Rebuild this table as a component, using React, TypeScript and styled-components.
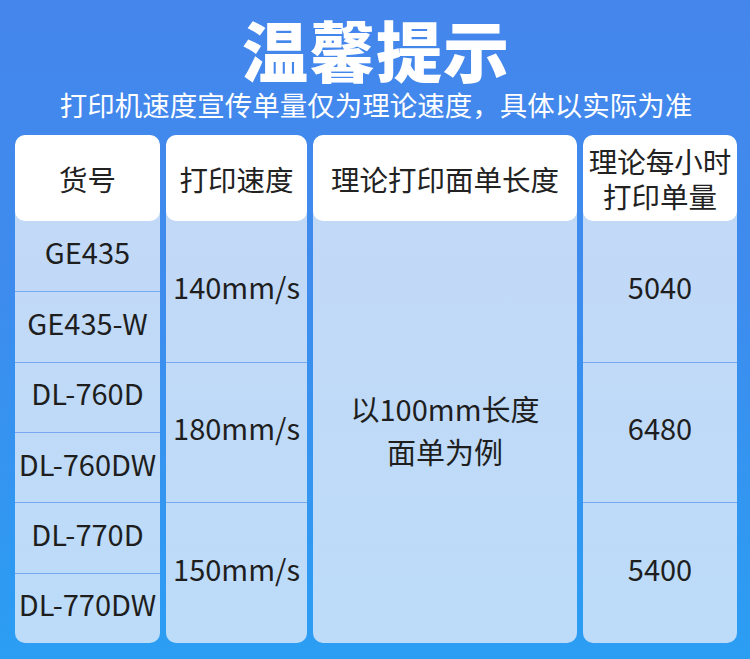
import * as React from 'react';
import styled, { createGlobalStyle } from 'styled-components';

const GlobalStyle = createGlobalStyle`
  html, body {
    margin: 0;
    padding: 0;
  }
  body {
    font-family: 'Noto Sans CJK SC', 'Noto Sans', sans-serif;
  }
`;

const Page = styled.main`
  width: 750px;
  height: 659px;
  box-sizing: border-box;
  padding: 0 13px 16px 15px;
  display: flex;
  flex-direction: column;
  background: linear-gradient(180deg, #4586ec 0%, #3d8cee 45%, #2b9ef3 100%);
  overflow: hidden;
`;

const Banner = styled.header`
  display: flex;
  flex-direction: column;
  align-items: center;
  height: 135px;
  color: #fff;
`;

const Title = styled.h1`
  margin: 12px 0 0;
  font-size: 66px;
  line-height: 72px;
  font-weight: 900;
  letter-spacing: 1px;
`;

const Subtitle = styled.p`
  margin: 2px 0 0;
  font-size: 27.5px;
  line-height: 36px;
  font-weight: 400;
`;

const Table = styled.section`
  flex: 1;
  display: grid;
  grid-template-columns: 145px 141px 264px 154px;
  column-gap: 6px;
`;

const Column = styled.div`
  display: flex;
  flex-direction: column;
  border-radius: 10px;
  overflow: hidden;
  background: linear-gradient(180deg, #c3d8f6 0%, #bcdcf9 100%);
`;

const HeadCell = styled.div`
  height: 86px;
  flex: none;
  display: flex;
  align-items: center;
  justify-content: center;
  text-align: center;
  background: #fff;
  border-radius: 10px;
  color: #222;
  font-size: 28.5px;
  line-height: 35px;
`;

const Body = styled.div`
  flex: 1;
  display: grid;
  grid-template-rows: repeat(6, 1fr);
`;

const Cell = styled.div<{ $span: number; $lh?: number }>`
  grid-row: span ${p => p.$span};
  display: flex;
  align-items: center;
  justify-content: center;
  padding-bottom: ${p => (p.$lh ? 4 : 10)}px;
  text-align: center;
  color: #1e1e1e;
  font-size: 29px;
  line-height: ${p => p.$lh ?? 34}px;
  & + & {
    border-top: 1px solid #76a9f0;
  }
`;

const models = ['GE435', 'GE435-W', 'DL-760D', 'DL-760DW', 'DL-770D', 'DL-770DW'];
const speeds = ['140mm/s', '180mm/s', '150mm/s'];
const perHour = ['5040', '6480', '5400'];

export default function App() {
  return (
    <>
      <GlobalStyle />
      <Page>
        <Banner>
          <Title>温馨提示</Title>
          <Subtitle>打印机速度宣传单量仅为理论速度，具体以实际为准</Subtitle>
        </Banner>
        <Table>
          <Column>
            <HeadCell>货号</HeadCell>
            <Body>
              {models.map(m => (
                <Cell key={m} $span={1}>{m}</Cell>
              ))}
            </Body>
          </Column>
          <Column>
            <HeadCell>打印速度</HeadCell>
            <Body>
              {speeds.map(s => (
                <Cell key={s} $span={2}>{s}</Cell>
              ))}
            </Body>
          </Column>
          <Column>
            <HeadCell>理论打印面单长度</HeadCell>
            <Body>
              <Cell $span={6} $lh={43}>以100mm长度<br />面单为例</Cell>
            </Body>
          </Column>
          <Column>
            <HeadCell>理论每小时<br />打印单量</HeadCell>
            <Body>
              {perHour.map(n => (
                <Cell key={n} $span={2}>{n}</Cell>
              ))}
            </Body>
          </Column>
        </Table>
      </Page>
    </>
  );
}
